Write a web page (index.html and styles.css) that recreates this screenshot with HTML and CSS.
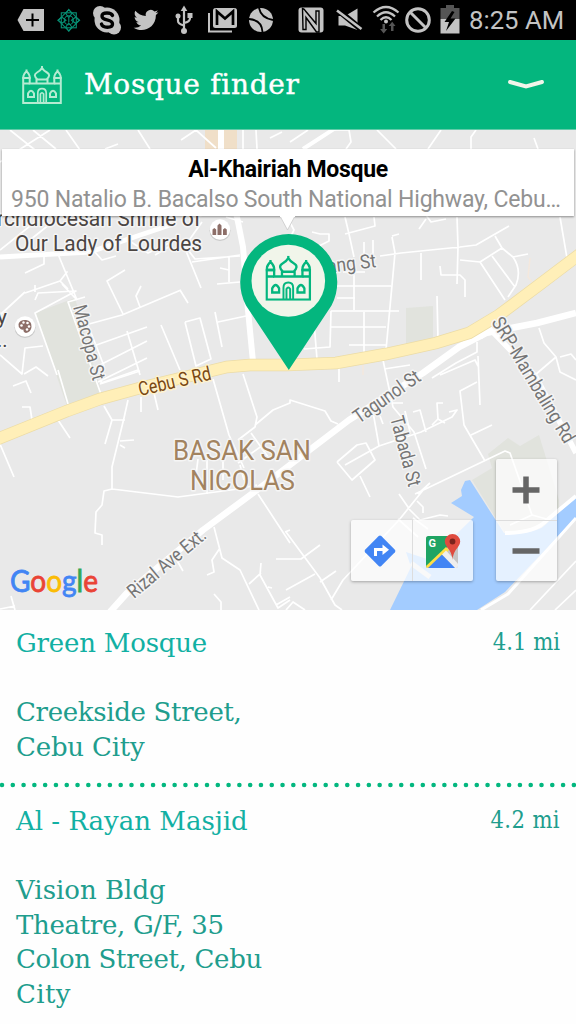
FILE: index.html
```html
<!DOCTYPE html>
<html lang="en">
<head>
<meta charset="utf-8">
<title>Mosque finder</title>
<link rel="stylesheet" href="styles.css">
</head>
<body>
<svg class="defs" width="0" height="0">
  <symbol id="mosque" viewBox="0 0 40 38">
    <g fill="none" stroke="currentColor" stroke-width="2" stroke-linejoin="miter">
      <path d="M1.2 37V12H7.7V17.5H32.3V12H38.8V37Z"/>
      <path d="M1.4 12V10Q1.6 8 4.5 5.2Q7.4 8 7.6 10V12ZM32.4 12V10Q32.6 8 35.5 5.2Q38.4 8 38.6 10V12ZM4.5 6V3.6M35.5 6V3.6M1.2 17.5H7.7M32.3 17.5H38.8"/>
      <path d="M15.500 13.500Q10.500 9 15 6.500Q18.500 4.600 20 2Q21.500 4.600 25 6.500Q29.500 9 24.500 13.500ZM14.500 13.500V17M25.500 13.500V17M13.500 13.500H26.500M20 0V3"/>
      <path d="M15.800 37V27Q15.800 22.600 20 22.600Q24.200 22.600 24.200 27V37M18.400 37V28Q20 25.500 21.600 28V37" stroke-width="1.700"/>
      <path d="M6 31V27.500Q9 21.800 12 27.500V31ZM28 31V27.500Q31 21.800 34 27.500V31Z"/>
    </g>
  </symbol>
</svg>

<div class="statusbar">
  <svg class="status-icons" viewBox="0 0 460 40" width="460" height="40">
    <g fill="#c3c3c3">
      <path d="M17.500 20L23.500 9H44V31H23.500Z"/>
      <path d="M32.500 13.500V26.500M26 20H39" stroke="#000" stroke-width="2"/>
      <g fill="none" stroke="#078e73" stroke-width="1.100">
        <rect x="61.300" y="12.800" width="15" height="15"/>
        <rect x="61.300" y="12.800" width="15" height="15" transform="rotate(45 68.800 20.300)"/>
        <circle cx="68.800" cy="20.300" r="4.500"/>
        <path d="M68.800 9.500l3 4-3 4-3-4zM68.800 23l3 4-3 4-3-4zM58 20.300l4-3 4 3-4 3zM71.500 20.300l4-3 4 3-4 3zM68.800 18v4"/>
      </g>
      <circle cx="107" cy="20" r="12.500"/><circle cx="100" cy="13" r="7"/><circle cx="114" cy="27.500" r="7"/>
      <path d="M112.500 15.500Q111.500 13 107 13Q102 13 102 16Q102 18.800 107 19.800Q112.500 21 112.500 24Q112.500 27.200 107.300 27.200Q102.500 27.200 101.500 24" fill="none" stroke="#000" stroke-width="3.400" stroke-linecap="round"/>
      <path d="M158.400 12.200c-.9.400-1.900.7-2.900.8 1-.6 1.800-1.600 2.200-2.700-1 .6-2 1-3.200 1.200a5.100 5.100 0 0 0-8.700 4.600c-4.200-.2-8-2.200-10.500-5.300-1.300 2.300-.7 5.200 1.600 6.800-.8 0-1.600-.3-2.300-.6 0 2.400 1.700 4.600 4.100 5-.7.200-1.500.3-2.300.1.700 2 2.500 3.500 4.700 3.500a10.200 10.200 0 0 1-7.500 2.100c8.800 5.700 22.300.7 22.300-12.700 1-.7 1.800-1.700 2.500-2.800z"/>
      <g fill="none" stroke="#c3c3c3" stroke-width="2.200"><path d="M184 9V31M178 17V21Q178 24 184 25.500M190 15V18Q190 22 184 23"/></g>
      <path d="M184 5.500L187.300 11H180.700Z"/><circle cx="184" cy="31" r="3"/><circle cx="178" cy="16" r="2.500"/><rect x="187.500" y="13" width="5" height="5"/>
      <path d="M208 13H210V30.500H232V32.500H208Z"/><rect x="213" y="8" width="24" height="20" rx="2.500"/>
      <path d="M217 25V11.500L225 18.500L233 11.500V25" fill="none" stroke="#000" stroke-width="2.700"/>
      <circle cx="261" cy="20" r="12"/>
      <path d="M249 19Q262 20 262.500 32M259 8Q261 18 273 20" fill="none" stroke="#000" stroke-width="1.800"/>
      <rect x="298.500" y="7.500" width="25" height="25" rx="3"/>
      <path d="M302.500 8.500Q304.500 9 305.500 11L316 23.500V11H319V32H316.500L306 17.500V29.500H303Z" fill="none" stroke="#000" stroke-width="1.400"/>
      <path d="M338.500 16H345L357.500 8.500V30L345 25.500H338.500Z"/>
      <path d="M336 8.500L362 30" stroke="#000" stroke-width="6"/><path d="M337 10.500L361.500 29" stroke="#c3c3c3" stroke-width="2.600"/>
      <g fill="none" stroke="#c3c3c3" stroke-width="2.300"><path d="M373.500 12.500Q386 1.500 398.500 12.500M377 16.500Q386 8 395 16.500M380.500 20Q386 14.500 391.500 20"/></g><circle cx="386" cy="21.500" r="2"/>
      <path d="M382.500 24h2.500v5h2.300l-3.600 4.500-3.600-4.500h2.400zM391 31h2.500v-5h2l-3.300-4.300-3.500 4.300h2.300z" fill="#555"/>
      <circle cx="418" cy="20" r="11.300" fill="none" stroke="#c3c3c3" stroke-width="3"/><path d="M410 12L426 28" stroke="#c3c3c3" stroke-width="3"/>
      <path d="M440.500 8H446V5H454V8H459.500V19H440.500Z" fill="#555"/><path d="M440.500 19H459.500V33.500H440.500Z"/><path d="M452 11L444.500 22H449L446 31L455.500 18.500H450.500L454.500 12Z" fill="#000"/>
    </g>
  </svg>
  <span class="clock">8:25 AM</span>
</div>

<header class="appbar">
  <svg class="logo" width="40" height="38"><use href="#mosque"/></svg>
  <h1 class="title">Mosque finder</h1>
  <svg class="chevron" width="38" height="12" viewBox="0 0 38 12"><path d="M3 3L19 7.500L35 3" fill="none" stroke="#f1f5ea" stroke-width="3.900" stroke-linecap="round"/></svg>
</header>

<section class="map">
  <svg class="map-canvas" viewBox="0 130 576 480" width="576" height="480">
    <rect y="130" width="576" height="480" fill="#e9e9e9"/>
    <g fill="#e1e3dd">
      <path d="M35 313L75 298L102 395L67 406Z"/><path d="M406 308L433 306V342L406 348Z"/>
      <path d="M472 480L492 468L488 454L508 438L520 446L539 435L559 500V514L545 526L505 533Z"/>
    </g>
    <path d="M205 130H237V149H205Z" fill="#f0dfc8"/>
    <path d="M390 610L411 567L406 552L430 560L474 517L451 503L462 496L461 490L465 481L470 480L504 533Q535 534 544 526L576 497V518L505 592L477 610Z" fill="#a3ccff"/>
    <path d="M411 563L430 577" stroke="#e9e9e9" stroke-width="5"/>
    <g fill="none" stroke="#fff" stroke-width="1.700" stroke-linejoin="round">
      <path d="M0 162L50 130M10 130L35 150M33 130L56 149M66 130L80 150M105 149L118 144M138 130L150 149M181 140L196 130L216 148M243 130V149M256 130L257 149M290 142L308 130M270 138L282 132M335 130L349 130L351 142L346 149M377 130L396 149M441 130L428 149M476 130L471 137V149M534 138L538 149"/>
      <path d="M0 250L40 218M30 240L55 220M58 254L77 300M25 273L44 264V257M25 293L60 281L67 272L60 281L68 289M35 300L38 293L76 291L35 313L57 375M35 285V292M62 284L76 299"/>
      <path d="M0 315L25 292M85 297L68 302L102 397M94 251L102 260L116 256M128 240L148 253L180 238M155 255L172 245M184 246L201 288M192 262L240 255M202 222L185 246L195 259L240 256M217 284L240 282M220 268L229 270M229 257V282M226 217L243 222"/>
      <path d="M125 270L107 281L123 314M141 286L136 296L140 307M180 290L188 303M89 324L122 315L181 290M88 325L104 366L101 383L138 370M88 348L147 327M96 367L147 341M98 382L147 358M127 331L140 375M161 325L180 370M185 322L200 318L211 359L196 366L185 322M215 312L222 347M218 322L246 316"/>
      <path d="M0 355L22 374L25 348L43 346M24 374L36 367L48 376M13 386L26 381L31 393M58 370L68 404M22 407L30 407L32 420M58 420L70 438M0 444L14 477M104 406L112 420L105 444M128 400L124 418L112 467V489L104 491L102 505L96 512L95 533L102 535V545M112 420H125M120 441L134 440M120 445L125 448M112 489L178 497L238 489L257 485M100 384L140 371M141 397V412M154 393L158 410"/>
      <path d="M213 379L229 435L244 468M243 374L257 417L255 427L238 440M255 425L273 410L290 403V400L325 411L331 421L338 424M251 433L268 457M238 463L270 440M198 459L196 475M207 460V494M223 457V480M240 465L244 480M258 494L290 543M285 532L290 530M214 527L222 558L240 570L259 610M220 548L212 560L214 572L207 575M175 557L183 571M276 559H290L301 559L320 545M261 563L260 575L278 608L290 600M249 584L261 573M214 594L221 602V610M276 605L290 597M11 596L15 610M0 609L15 606M272 588L268 587"/>
      <path d="M286 532L320 578L335 605L342 610M286 610L293 602L305 610M286 590L315 574M320 582L336 571M331 600L343 580L399 520L424 489M399 494L410 510L420 520L440 515L448 516M415 494L505 451L510 453L532 515L550 520M532 515L510 525M413 518L428 529M398 519L418 537M418 494L430 483M417 501L423 507V513"/>
      <path d="M286 215L294 230L288 242M312 232L320 234L329 234V241L317 247M345 217L349 234L354 257M345 234L375 226L374 217M364 242V255M373 240V260M380 256L401 253L460 247L476 245L509 226M392 236L399 234M392 237L395 253L386 350M343 272H365M337 286H391M337 298H355M354 270V310M331 311H399M331 327H386M331 311L330 347L304 349M313 310L317 359M364 312V353M349 345H387M421 253V280M426 219L419 229M426 215L431 222L446 219M457 217L458 247L457 284M440 266L441 275H460L465 280V297M460 260L480 262L502 248M480 262L505 300M495 236L502 248L513 257Q522 270 516 285L508 297M492 256L515 287M513 257L528 254M437 296L438 340M560 217L567 258"/>
      <path d="M339 366V382M383 360L387 379L393 407L414 432L426 469M384 369L410 365M432 378L456 363L477 352V342M440 375L475 360L478 366M478 356L480 405M477 382L460 391L464 425L485 461M471 435L492 425M379 446L421 432L452 417L457 410L449 412M393 403H403M373 412L379 446M405 411L410 432M413 412L420 410L426 432M432 425L438 419L445 423M438 419L437 403H443M380 416L383 424M379 446L345 465M337 462L357 445L366 443L375 460L352 480L337 462M360 476L370 497M539 328L544 343L556 357L560 372L576 380M556 357L535 375M560 357L571 354L576 360"/>
      <path d="M481 610L508 594L576 518" stroke-width="3"/><path d="M530 610L576 561M555 610L576 590"/>
    </g>
    <path d="M530 258L528 277L532 282M363 365V375" fill="none" stroke="#f4e8dd" stroke-width="1.500"/>
    <g fill="none" stroke="#fff" stroke-linejoin="round">
      <path d="M0 257L90 252L170 225" stroke-width="5"/>
      <path d="M221 130V149L237 217L243 247L248 310L253 362" stroke-width="6"/>
      <path d="M303 149L337 127M505 533Q535 533 547 520L576 496" stroke-width="4"/>
      <path d="M480 337L490 329L536 377L576 453" stroke-width="5.500"/>
      <path d="M110 612L127 593L203 530L257 490L349 420L423 373L459 347L486 333L537 323L576 313" stroke-width="6.500"/>
    </g>
    <path d="M-5 440L67 411L100 399L140 388L227 367L250 365L287 365L336 363L386 354L436 343L469 333L499 315L539 285L580 254" fill="none" stroke="#ecdca6" stroke-width="12.500"/>
    <path d="M-5 440L67 411L100 399L140 388L227 367L250 365L287 365L336 363L386 354L436 343L469 333L499 315L539 285L580 254" fill="none" stroke="#ffefb8" stroke-width="11"/>
    <g class="labels">
      <text x="-3" y="226" textLength="204" lengthAdjust="spacingAndGlyphs" font-size="21.500">rchdiocesan Shrine of</text>
      <text x="15" y="250.500" textLength="187" lengthAdjust="spacingAndGlyphs" font-size="22">Our Lady of Lourdes</text>
      <text x="-3" y="324" font-size="21">y</text><text x="-3" y="347" font-size="20">..</text>
      <g class="street">
        <text transform="translate(73 307) rotate(75)" textLength="77" lengthAdjust="spacingAndGlyphs">Macopa St</text>
        <text transform="translate(140 396) rotate(-13)" textLength="74" lengthAdjust="spacingAndGlyphs" class="main">Cebu S Rd</text>
        <text transform="translate(328 273) rotate(-7)" textLength="49" lengthAdjust="spacingAndGlyphs">ang St</text>
        <text transform="translate(359 424) rotate(-35)" textLength="77" lengthAdjust="spacingAndGlyphs">Tagunol St</text>
        <text transform="translate(390 418) rotate(75)" textLength="72" lengthAdjust="spacingAndGlyphs">Tabada St</text>
        <text transform="translate(491 322) rotate(59)" textLength="143" lengthAdjust="spacingAndGlyphs">SRP-Mambaling Rd</text>
        <text transform="translate(134 599) rotate(-40)" textLength="96" lengthAdjust="spacingAndGlyphs">Rizal Ave Ext.</text>
      </g>
      <g class="district"><text x="173" y="460" textLength="138" lengthAdjust="spacingAndGlyphs">BASAK SAN</text><text x="190" y="490" textLength="105" lengthAdjust="spacingAndGlyphs">NICOLAS</text></g>
    </g>
    <text class="google" x="10" y="591.500" textLength="88" lengthAdjust="spacingAndGlyphs"><tspan fill="#4285f4" stroke="#4285f4">G</tspan><tspan fill="#ea4335" stroke="#ea4335">o</tspan><tspan fill="#fbbc05" stroke="#fbbc05">o</tspan><tspan fill="#4285f4" stroke="#4285f4">g</tspan><tspan fill="#34a853" stroke="#34a853">l</tspan><tspan fill="#ea4335" stroke="#ea4335">e</tspan></text>
    <g><circle cx="220" cy="230.500" r="10.500" fill="#c9c9c9"/><circle cx="220" cy="229.500" r="10.200" fill="#fff"/><path d="M212.500 235V229.500l1.800-1.500 1.900 1.500V235zM217.500 235V225.500l2-2 2 2V235zM223 235V229.500l1.900-1.500 1.900 1.500V235z" fill="#8d6e68"/>
    <circle cx="25" cy="327.500" r="10.500" fill="#c9c9c9"/><circle cx="25" cy="326.500" r="10.200" fill="#fff"/><path d="M18.500 324Q20 319.500 26 320Q32 321 31.500 327Q31 332 26 333Q23 332 23.500 329.500Q22 330 20.500 329Q18 327 18.500 324Z" fill="#8d6e68"/><g fill="#fff"><circle cx="21.500" cy="325.500" r="1.300"/><circle cx="23.500" cy="322.500" r="1.200"/><circle cx="27.500" cy="323" r="1.300"/><circle cx="29" cy="326.500" r="1.300"/><circle cx="27" cy="329.500" r="1.300"/></g></g>
    <path d="M288.800 370L246 305.500A48.500 48.500 0 1 1 331.500 305.500Z" fill="#04b67e"/>
    <ellipse cx="288.300" cy="280.800" rx="36.800" ry="36" fill="#f1f5ea"/>
    <svg class="pin-mosque" x="265.300" y="255.800" width="46" height="45" viewBox="0 0 40 38" preserveAspectRatio="none"><use href="#mosque" width="40" height="38"/></svg>
  </svg>

  <div class="info">
    <div class="info-name">Al-Khairiah Mosque</div>
    <div class="info-address">950 Natalio B. Bacalso South National Highway, Cebu…</div>
    <svg class="info-tail" width="16" height="15" viewBox="0 0 16 15"><path d="M0 0L7.500 14L15 0" fill="#fff" stroke="#c9c9c9" stroke-width=".8"/><path d="M0 0H15" stroke="#fff" stroke-width="2"/></svg>
  </div>

  <div class="links">
    <span class="map-button"><svg width="32" height="32" viewBox="0 0 32 32"><path d="M14.700 1.100Q16 0 17.300 1.100L30.900 14.700Q32 16 30.900 17.300L17.300 30.900Q16 32 14.700 30.900L1.100 17.300Q0 16 1.100 14.700Z" fill="#4285f4"/><path d="M11.500 21V14.500H20" fill="none" stroke="#fff" stroke-width="3"/><path d="M18.500 9.500L25 14.800L18.500 20Z" fill="#fff"/></svg></span>
    <span class="map-button"><svg width="36" height="36" viewBox="0 0 36 36"><clipPath id="tile"><rect x="1" y="3" width="32" height="32" rx="2.500"/></clipPath><g clip-path="url(#tile)"><path d="M1 3H33V35H1Z" fill="#c5c5c5"/><path d="M1 3H28V9L1 35Z" fill="#1fa463"/><path d="M0 34L21 14L24 17L3 38Z" fill="#ffdf45"/><path d="M3 35L17 21.500L31 35Z" fill="#4285f4"/><path d="M17 21.500L21 17.500L36 34L31 36Z" fill="#eee"/></g><text x="3.500" y="14" class="tile-g">G</text><path d="M27.500 27Q27.300 20 22 14A7.700 7.700 0 1 1 33 14Q27.700 20 27.500 27Z" fill="#df4b3f"/><circle cx="27.500" cy="8.500" r="2.900" fill="#7b231d"/></svg></span>
  </div>
  <div class="zoom">
    <span class="map-button"><svg width="28" height="28" viewBox="0 0 28 28"><path d="M14 .5V27.500M.5 14H27.500" stroke="#666" stroke-width="5.500"/></svg></span>
    <span class="map-button"><svg width="28" height="28" viewBox="0 0 28 28"><path d="M.5 14H27.500" stroke="#666" stroke-width="5.500"/></svg></span>
  </div>
</section>

<main class="list">
  <article class="item">
    <div class="item-head"><h2 class="name snug">Green Mosque</h2><span class="distance">4.1 mi</span></div>
    <p class="address"><span class="line tight">Creekside Street,</span><span class="line snug">Cebu City</span></p>
  </article>
  <svg class="divider" width="576" height="6"><path d="M2 3H576" stroke="#03b77f" stroke-width="4.600" stroke-linecap="round" stroke-dasharray="0 10.790"/></svg>
  <article class="item">
    <div class="item-head"><h2 class="name">Al - Rayan Masjid</h2><span class="distance loose">4.2 mi</span></div>
    <p class="address"><span class="line">Vision Bldg</span><span class="line tight">Theatre, G/F, 35</span><span class="line tight">Colon Street, Cebu</span><span class="line loose">City</span></p>
  </article>
</main>
</body>
</html>
```
FILE: styles.css
```css
* { box-sizing: border-box; }
body { margin: 0; width: 576px; height: 1024px; overflow: hidden; background: #fefefe; font-family: Roboto, sans-serif; }
.defs { position: absolute; }
.statusbar { height: 40px; background: #000; display: flex; align-items: center; }
.status-icons { flex: none; }
.clock { margin-left: 9px; color: #c3c3c3; font-size: 25.7px; line-height: 40px; white-space: nowrap; }
.appbar { height: 90px; background: #04b67e; display: flex; align-items: center; padding: 0 31px 0 22px; border-bottom: 1px solid #62cba9; }
.logo { color: #b5ebd2; flex: none; }
.title { margin: 0 auto 0 22px; color: #fff; font: 28px/36px "DejaVu Serif", serif; letter-spacing: 0.7px; -webkit-text-stroke: 0.4px #fff; }
.chevron { flex: none; }
.map { height: 480px; position: relative; overflow: hidden; }
.map-canvas { display: block; }
.labels { fill: #4b4543; stroke: #f5f5f5; stroke-width: 3px; paint-order: stroke; stroke-linejoin: round; }
.street { fill: #757575; font-size: 19.5px; }
.main { fill: #7a4812; stroke: #fff3cc; }
.district { fill: #a28360; font-size: 28px; }
.google { font: 30px Lato, sans-serif; stroke-width: 0.8px; }
.pin-mosque { color: #04b67e; }
.info { position: absolute; left: 2px; top: 19px; width: 572px; height: 67px; padding: 6px 9px; background: #fff; box-shadow: 0 1px 2px rgba(0,0,0,.4); text-align: center; }
.info-name { color: #000; font-weight: 700; font-size: 23px; line-height: 30px; letter-spacing: -0.3px; }
.info-address { color: #929292; font-size: 23px; line-height: 30px; letter-spacing: -0.19px; text-align: left; white-space: nowrap; }
.info-tail { position: absolute; left: 278px; top: 67px; }
.links, .zoom { position: absolute; display: flex; background: rgba(255,255,255,.72); border-radius: 2px; box-shadow: 0 1px 3px rgba(0,0,0,.3); }
.links { left: 350.5px; top: 390px; }
.zoom { left: 496px; top: 329px; flex-direction: column; }
.map-button { width: 61px; height: 61px; display: flex; align-items: center; justify-content: center; }
.links .map-button { padding-right: 2px; }
.links .map-button + .map-button { border-left: 1px solid #ddd; padding-right: 0; }
.zoom .map-button { padding-right: 1px; }
.zoom .map-button + .map-button { border-top: 1px solid #ddd; }
.tile-g { font: bold 11px Roboto, sans-serif; fill: #fff; }
.list { font-family: "DejaVu Serif", serif; color: #209d8d; }
.item { padding: 16px 16px 0; height: 172px; }
.divider { display: block; }
.item-head { display: flex; justify-content: space-between; height: 69px; }
.name { margin: 0; color: #12b0a3; font-size: 26px; font-weight: 400; line-height: 35px; }
.distance { font-family: "DejaVu Serif Condensed", "DejaVu Serif", serif; font-stretch: condensed; font-size: 23.5px; line-height: 32px; }
.address { margin: 0; font-size: 26px; line-height: 34.6px; white-space: nowrap; }
.line { display: block; }
.snug { letter-spacing: -0.2px; }
.tight { letter-spacing: -0.32px; }
.loose { letter-spacing: 0.4px; }
```
